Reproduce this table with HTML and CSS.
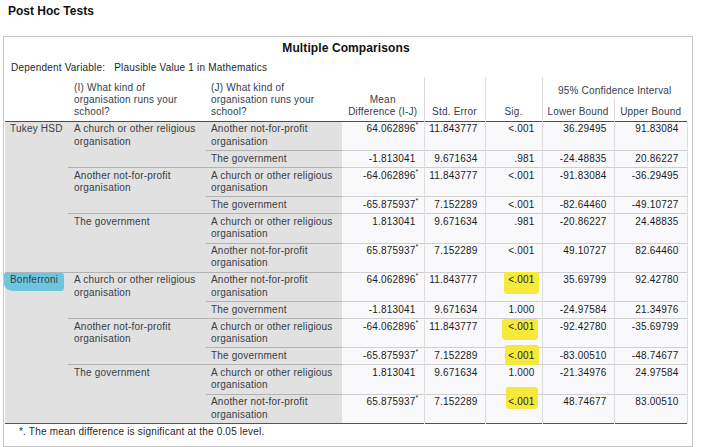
FILE: index.html
```html
<!DOCTYPE html>
<html lang="en">
<head>
<meta charset="utf-8">
<title>Post Hoc Tests</title>
<link rel="stylesheet" href="styles.css">
</head>
<body>
<div class="page-title">Post Hoc Tests</div>
<div class="box">
  <div class="caption">Multiple Comparisons</div>
  <div class="depvar">Dependent Variable:&nbsp;&nbsp; Plausible Value 1 in Mathematics</div>
  <table class="mc">
    <colgroup>
      <col class="w1"><col class="w2"><col class="w3"><col class="w4"><col class="w5"><col class="w6"><col class="w7"><col class="w8">
    </colgroup>
    <thead>
      <tr>
        <th rowspan="2"></th>
        <th rowspan="2" class="h-left h-i">(I) What kind of<br>organisation runs your<br>school?</th>
        <th rowspan="2" class="h-left h-j">(J) What kind of<br>organisation runs your<br>school?</th>
        <th rowspan="2" class="h-c">Mean<br>Difference (I-J)</th>
        <th rowspan="2" class="h-c vl">Std. Error</th>
        <th rowspan="2" class="h-c vl">Sig.</th>
        <th colspan="2" class="h-ci vl">95% Confidence Interval</th>
      </tr>
      <tr>
        <th class="h-sub vl">Lower Bound</th>
        <th class="h-sub vl">Upper Bound</th>
      </tr>
    </thead>
    <tbody class="g1">
      <tr>
        <td rowspan="6" class="lab l1">Tukey HSD</td>
        <td rowspan="2" class="lab l2">A church or other religious<br>organisation</td>
        <td class="lab l3">Another not-for-profit<br>organisation</td>
        <td class="n m">64.062896<sup class="ast">*</sup></td>
        <td class="n s vl">11.843777</td>
        <td class="n g vl">&lt;.001</td>
        <td class="n lo vl">36.29495</td>
        <td class="n up vl">91.83084</td>
      </tr>
      <tr>
        <td class="lab l3 bt">The government</td>
        <td class="n m bt">-1.813041</td>
        <td class="n s vl bt">9.671634</td>
        <td class="n g vl bt">.981</td>
        <td class="n lo vl bt">-24.48835</td>
        <td class="n up vl bt">20.86227</td>
      </tr>
      <tr>
        <td rowspan="2" class="lab l2 bt">Another not-for-profit<br>organisation</td>
        <td class="lab l3 bt">A church or other religious<br>organisation</td>
        <td class="n m bt">-64.062896<sup class="ast">*</sup></td>
        <td class="n s vl bt">11.843777</td>
        <td class="n g vl bt">&lt;.001</td>
        <td class="n lo vl bt">-91.83084</td>
        <td class="n up vl bt">-36.29495</td>
      </tr>
      <tr>
        <td class="lab l3 bt">The government</td>
        <td class="n m bt">-65.875937<sup class="ast">*</sup></td>
        <td class="n s vl bt">7.152289</td>
        <td class="n g vl bt">&lt;.001</td>
        <td class="n lo vl bt">-82.64460</td>
        <td class="n up vl bt">-49.10727</td>
      </tr>
      <tr>
        <td rowspan="2" class="lab l2 bt">The government</td>
        <td class="lab l3 bt">A church or other religious<br>organisation</td>
        <td class="n m bt">1.813041</td>
        <td class="n s vl bt">9.671634</td>
        <td class="n g vl bt">.981</td>
        <td class="n lo vl bt">-20.86227</td>
        <td class="n up vl bt">24.48835</td>
      </tr>
      <tr>
        <td class="lab l3 bt">Another not-for-profit<br>organisation</td>
        <td class="n m bt">65.875937<sup class="ast">*</sup></td>
        <td class="n s vl bt">7.152289</td>
        <td class="n g vl bt">&lt;.001</td>
        <td class="n lo vl bt">49.10727</td>
        <td class="n up vl bt">82.64460</td>
      </tr>
    </tbody>
    <tbody class="g2">
      <tr>
        <td rowspan="6" class="lab l1 bt"><span class="hl hl-blue">Bonferroni</span></td>
        <td rowspan="2" class="lab l2 bt">A church or other religious<br>organisation</td>
        <td class="lab l3 bt">Another not-for-profit<br>organisation</td>
        <td class="n m bt">64.062896<sup class="ast">*</sup></td>
        <td class="n s vl bt">11.843777</td>
        <td class="n g vl bt"><span class="hl hl-a">&lt;.001</span></td>
        <td class="n lo vl bt">35.69799</td>
        <td class="n up vl bt">92.42780</td>
      </tr>
      <tr>
        <td class="lab l3 bt">The government</td>
        <td class="n m bt">-1.813041</td>
        <td class="n s vl bt">9.671634</td>
        <td class="n g vl bt">1.000</td>
        <td class="n lo vl bt">-24.97584</td>
        <td class="n up vl bt">21.34976</td>
      </tr>
      <tr>
        <td rowspan="2" class="lab l2 bt">Another not-for-profit<br>organisation</td>
        <td class="lab l3 bt">A church or other religious<br>organisation</td>
        <td class="n m bt">-64.062896<sup class="ast">*</sup></td>
        <td class="n s vl bt">11.843777</td>
        <td class="n g vl bt"><span class="hl hl-b">&lt;.001</span></td>
        <td class="n lo vl bt">-92.42780</td>
        <td class="n up vl bt">-35.69799</td>
      </tr>
      <tr>
        <td class="lab l3 bt">The government</td>
        <td class="n m bt">-65.875937<sup class="ast">*</sup></td>
        <td class="n s vl bt">7.152289</td>
        <td class="n g vl bt"><span class="hl hl-c">&lt;.001</span></td>
        <td class="n lo vl bt">-83.00510</td>
        <td class="n up vl bt">-48.74677</td>
      </tr>
      <tr>
        <td rowspan="2" class="lab l2 bt">The government</td>
        <td class="lab l3 bt">A church or other religious<br>organisation</td>
        <td class="n m bt">1.813041</td>
        <td class="n s vl bt">9.671634</td>
        <td class="n g vl bt">1.000</td>
        <td class="n lo vl bt">-21.34976</td>
        <td class="n up vl bt">24.97584</td>
      </tr>
      <tr>
        <td class="lab l3 bt">Another not-for-profit<br>organisation</td>
        <td class="n m bt">65.875937<sup class="ast">*</sup></td>
        <td class="n s vl bt">7.152289</td>
        <td class="n g vl bt"><span class="hl hl-d">&lt;.001</span></td>
        <td class="n lo vl bt">48.74677</td>
        <td class="n up vl bt">83.00510</td>
      </tr>
    </tbody>
  </table>
  <div class="foot">*. The mean difference is significant at the 0.05 level.</div>
</div>
</body>
</html>
```

FILE: styles.css
```css
* { box-sizing: border-box; }

body {
  margin: 0;
  background: #ffffff;
  font-family: "Liberation Sans", Arial, sans-serif;
  color: #222222;
}

.page-title {
  font-size: 12px;
  font-weight: bold;
  line-height: 14px;
  padding: 4px 0 0 8px;
  color: #111111;
}

.box {
  width: 690px;
  margin: 18px 0 0 3px;
  border: 1px solid #c6c6c6;
  padding: 4px 4px 8px 1px;
}

.caption {
  width: 682px;
  font-size: 12px;
  font-weight: bold;
  line-height: 14px;
  letter-spacing: 0.1px;
  text-align: center;
  color: #111111;
}

.depvar {
  margin-top: 7px;
  padding-left: 6px;
  font-size: 10px;
  line-height: 12.4px;
  letter-spacing: 0.2px;
  color: #1f1f1f;
}

.mc {
  margin-top: 2.6px;
  width: 682px;
  table-layout: fixed;
  border-collapse: collapse;
  font-size: 10px;
  line-height: 12.4px;
  letter-spacing: 0.2px;
  border-bottom: 1px solid #4d5660;
}

.w1 { width: 63px; }
.w2 { width: 138px; }
.w3 { width: 136px; }
.w4 { width: 82px; }
.w5 { width: 61px; }
.w6 { width: 57px; }
.w7 { width: 72px; }
.w8 { width: 73px; }

th {
  font-weight: normal;
  color: #34404c;
  padding: 0 2px 2px;
  vertical-align: bottom;
  text-align: center;
  white-space: nowrap;
}

.h-left { text-align: left; }
.h-i { padding-left: 6px; }
.h-j { padding-left: 5px; }
.h-ci { padding-top: 8px; padding-bottom: 1px; }
.h-sub { padding-top: 8px; padding-bottom: 2px; }

th.vl { border-left: 1px solid #dcdcdc; }

td {
  padding: 1.5px 4px 2px;
  vertical-align: top;
  white-space: nowrap;
}

.g1 tr:first-child td { border-top: 1px solid #444e58; }

.lab {
  background: #e1e1e1;
  color: #383e45;
}
.l1 { padding-left: 5px; }
.l2 { padding-left: 6px; }
.l3 { padding-left: 5px; }
.lab.bt { border-top: 1px solid #b3b3b3; }

.n {
  text-align: right;
  background: #f9f9fb;
  color: #1b1b1b;
}
.n.bt { border-top: 1px solid #d0d0d0; }
td.vl { border-left: 1px solid #dedede; }
.m { padding-right: 8px; }
.s { padding-right: 7px; }
.g { padding-right: 7px; }
.lo { padding-right: 7px; }
.up { padding-right: 8px; border-right: 1px solid #dedede; }

.ast {
  font-size: 7px;
  line-height: 0;
  vertical-align: 5px;
  margin-right: -3px;
}

.hl {
  position: relative;
  z-index: 0;
}
.hl::before {
  content: "";
  position: absolute;
  z-index: -1;
  background: #f5e93c;
}
.hl-a::before { left: -4px; right: -4px; top: -2px; bottom: -9px; border-radius: 2px 3px 4px 3px; }
.hl-b::before { left: -6px; right: -3px; top: -2px; bottom: -8px; border-radius: 3px 2px 3px 4px; }
.hl-c::before { left: -3px; right: -4px; top: -5px; bottom: -4px; border-radius: 2px 3px 3px 2px; }
.hl-d::before { left: -2px; right: -3px; top: -9px; bottom: -2px; border-radius: 2px 3px 4px 3px; }

.hl-blue::before {
  background: #6cc6de;
  left: -6px;
  right: -6px;
  top: -1px;
  bottom: -6px;
  border-radius: 1px 2px 3px 10px / 1px 2px 3px 7px;
}

.foot {
  margin-top: 2px;
  padding-left: 14px;
  font-size: 10px;
  line-height: 12.4px;
  letter-spacing: 0.2px;
  color: #1f1f1f;
}
```
